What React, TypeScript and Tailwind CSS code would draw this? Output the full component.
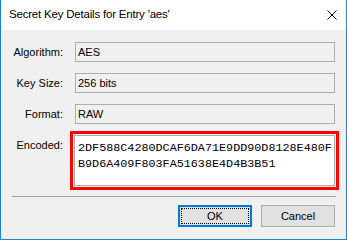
import React from "react";

const font = { fontFamily: '"Liberation Sans", Arial, sans-serif' };

function Field({ label, value }: { label: string; value: string }) {
  return (
    <div className="flex items-center h-[20px]">
      <div className="w-[62px] text-right text-[11px] text-black leading-none">{label}</div>
      <div className="ml-[12px] w-[260px] h-[20px] border border-[#adadad] bg-[#f0f0f0] flex items-center pl-[2px] text-[11px] text-black leading-none">
        {value}
      </div>
    </div>
  );
}

export default function App() {
  return (
    <div
      className="w-[347px] h-[240px] bg-[#f0f0f0] border-x border-b border-[#1883d7] flex flex-col"
      style={font}
    >
      <div className="h-[30px] bg-white flex items-center justify-between shrink-0">
        <span className="ml-[8px] text-[11.5px] tracking-[-0.2px] text-black">Secret Key Details for Entry 'aes'</span>
        <svg width="10" height="10" viewBox="0 0 10 10" className="mr-[9px]">
          <path d="M0.5 0.5 L9.5 9.5 M9.5 0.5 L0.5 9.5" stroke="#000" strokeWidth="1" />
        </svg>
      </div>
      <div className="flex flex-col pt-[12px]">
        <div className="flex flex-col gap-[11px]">
          <Field label="Algorithm:" value="AES" />
          <Field label="Key Size:" value="256 bits" />
          <Field label="Format:" value="RAW" />
        </div>
        <div className="flex mt-[7px]">
          <div className="w-[62px] text-right text-[11px] text-black pt-[9px] leading-none">Encoded:</div>
          <div className="ml-[7px] border-[3px] border-[#ff0000] p-[1px]">
            <div
              className="w-[261px] h-[51px] border border-[#adadad] bg-white pl-[3px] pt-[4px] text-[11.75px] leading-[16px] text-black"
              style={{ fontFamily: '"Liberation Mono", "Courier New", monospace' }}
            >
              <div>2DF588C4280DCAF6DA71E9DD90D8128E480F</div>
              <div>B9D6A409F803FA51638E4D4B3B51</div>
            </div>
          </div>
        </div>
        <div className="ml-[11px] w-[324px] h-[1px] bg-[#a0a0a0] mt-[6px]" />
        <div className="flex justify-end gap-[9px] mt-[8px] pr-[11px]">
          <div className="w-[74px] h-[22px] border-2 border-[#0078d7] bg-[#e1e1e1] p-[1px]">
            <div className="w-full h-full border border-dotted border-black flex items-center justify-center text-[11px] text-black leading-none">
              OK
            </div>
          </div>
          <div className="w-[74px] h-[22px] border border-[#adadad] bg-[#e1e1e1] flex items-center justify-center text-[11px] text-black leading-none">
            Cancel
          </div>
        </div>
      </div>
    </div>
  );
}
